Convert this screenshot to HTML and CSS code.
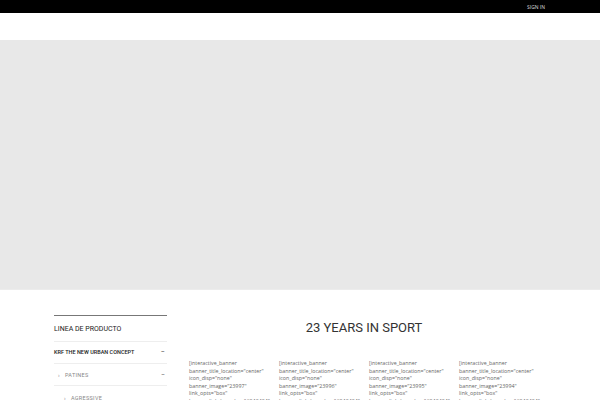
FILE: index.html
```html
<!DOCTYPE html>
<html>
<head>
<meta charset="utf-8">
<link rel="stylesheet" href="styles.css">
</head>
<body>
<div class="topbar">
  <div class="topbar-inner"><a class="signin" href="#">SIGN IN</a></div>
</div>
<div class="header"></div>
<div class="banner"></div>
<div class="content">
  <aside class="sidebar">
    <h3 class="side-title">LINEA DE PRODUCTO</h3>
    <ul class="cats">
      <li class="cat top"><span>KRF THE NEW URBAN CONCEPT</span><span class="toggle">−</span></li>
      <li class="cat sub"><span><span class="arr">›</span>PATINES</span><span class="toggle">−</span></li>
      <li class="cat subsub"><span><span class="arr">›</span>AGRESSIVE</span></li>
    </ul>
  </aside>
  <main class="main">
    <h2 class="title">23 YEARS IN SPORT</h2>
    <div class="cols">
      <div class="col">[interactive_banner banner_title_location="center" icon_disp="none" banner_image="23997" link_opts="box" banner_link_bg_color="#242424"</div>
      <div class="col">[interactive_banner banner_title_location="center" icon_disp="none" banner_image="23996" link_opts="box" banner_link_bg_color="#242424"</div>
      <div class="col">[interactive_banner banner_title_location="center" icon_disp="none" banner_image="23995" link_opts="box" banner_link_bg_color="#242424"</div>
      <div class="col">[interactive_banner banner_title_location="center" icon_disp="none" banner_image="23994" link_opts="box" banner_link_bg_color="#242424"</div>
    </div>
  </main>
</div>
</body>
</html>
```
FILE: styles.css
```css
html, body { margin: 0; padding: 0; background: #fff; }
body { font-family: "Open Sans", sans-serif; overflow: hidden; height: 400px; }
.topbar { background: #000; height: 13px; }
.topbar-inner { width: 492px; margin: 0 auto; display: flex; justify-content: flex-end; height: 13px; align-items: center; }
.signin { color: #ddd; text-decoration: none; font-family: "Open Sans", sans-serif; font-size: 5px; padding-right: 1px; }
.header { height: 27px; background: #fff; }
.banner { height: 249px; background: #e8e8e8; border-bottom: 1px solid #ececec; }
.content { width: 492px; margin: 0 auto; display: flex; gap: 21px; padding-top: 25px; }
.sidebar { width: 113px; flex: none; border-top: 1px solid #777; }
.side-title { margin: 0; font-family: Roboto, sans-serif; font-weight: 400; font-size: 7px; color: #222; padding: 9px 0 7px; line-height: 9px; border-bottom: 1px solid #eee; }
.cats { list-style: none; margin: 0; padding: 0; }
.cat { display: flex; justify-content: space-between; align-items: center; height: 21px; border-bottom: 1px solid #eee; font-family: Roboto, sans-serif; font-size: 5.5px; }
.cat.top { color: #222; font-weight: 500; padding-bottom: 1px; height: 20px; }
.cat.sub { color: #888; padding-left: 4px; letter-spacing: 0.3px; padding-top: 1px; height: 20px; }
.cat.subsub { color: #888; padding-left: 10px; letter-spacing: 0.3px; border-bottom: none; padding-top: 2px; height: 19px; }
.arr { margin-right: 5px; }
.toggle { color: #666; font-size: 7px; padding-right: 2px; }
.main { flex: 1; }
.title { margin: 0; text-align: center; font-family: Roboto, sans-serif; font-weight: 400; font-size: 13px; color: #333; line-height: 16px; padding-top: 5px; padding-right: 8px; }
.cols { display: grid; grid-template-columns: repeat(4, 89px); gap: 1px; padding-left: 1px; margin-top: 24px; }
.col { font-size: 5.3px; line-height: 7.6px; color: #666; }
```
